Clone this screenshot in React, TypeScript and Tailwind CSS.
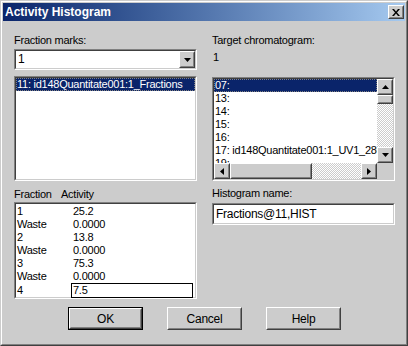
import React from "react";

function Sunken({ className = "", inner = "", children }: { className?: string; inner?: string; children?: React.ReactNode }) {
  return (
    <div className={`border border-t-[#808080] border-l-[#808080] border-r-white border-b-white ${className}`}>
      <div className={`h-full w-full border border-t-[#404040] border-l-[#404040] border-r-[#cccccc] border-b-[#cccccc] ${inner}`}>{children}</div>
    </div>
  );
}

function Raised({ className = "", children }: { className?: string; children?: React.ReactNode }) {
  return (
    <div className={`border border-t-white border-l-white border-r-[#404040] border-b-[#404040] bg-[#cccccc] ${className}`}>
      <div className="h-full w-full border border-t-[#cccccc] border-l-[#cccccc] border-r-[#808080] border-b-[#808080] flex items-center justify-center">
        {children}
      </div>
    </div>
  );
}

const Down = () => (
  <svg width="7" height="4" viewBox="0 0 7 4"><path d="M0 0h7L3.5 4z" fill="#000" /></svg>
);
const Up = () => (
  <svg width="7" height="4" viewBox="0 0 7 4"><path d="M0 4h7L3.5 0z" fill="#000" /></svg>
);
const Left = () => (
  <svg width="4" height="7" viewBox="0 0 4 7"><path d="M4 0v7L0 3.5z" fill="#000" /></svg>
);
const Right = () => (
  <svg width="4" height="7" viewBox="0 0 4 7"><path d="M0 0v7L4 3.5z" fill="#000" /></svg>
);

const dither =
  "bg-[repeating-conic-gradient(#ffffff_0_25%,#cccccc_0_50%)] [background-size:2px_2px]";

function Btn({ label, def }: { label: string; def?: boolean }) {
  const inner = <Raised className="w-full h-full"><span className="text-[12px]">{label}</span></Raised>;
  return def ? (
    <div className="w-[75px] h-[23px] border border-black">{inner}</div>
  ) : (
    <div className="w-[75px] h-[23px]">{inner}</div>
  );
}

export default function App() {
  const rows: [string, string][] = [
    ["1", "25.2"],
    ["Waste", "0.0000"],
    ["2", "13.8"],
    ["Waste", "0.0000"],
    ["3", "75.3"],
    ["Waste", "0.0000"],
  ];
  const items = ["07:", "13:", "14:", "15:", "16:", "17: id148Quantitate001:1_UV1_280nm", "19:"];
  return (
    <div className="w-[408px] h-[346px] border border-t-[#cccccc] border-l-[#cccccc] border-r-[#404040] border-b-[#404040] font-['Liberation_Sans',Arial,sans-serif] text-[11px] tracking-[-0.25px] text-black select-none">
      <div className="h-full w-full border border-t-white border-l-white border-r-[#808080] border-b-[#808080] bg-[#cccccc] p-px flex flex-col">
        {/* title bar */}
        <div className="h-[18px] bg-linear-to-r from-[#0a246a] to-[#a6caf0] flex items-center justify-between pl-[2px] pr-[1px]">
          <span className="text-white font-bold text-[12px] tracking-normal leading-none">Activity Histogram</span>
          <Raised className="w-[16px] h-[14px]">
            <svg width="8" height="7" viewBox="0 0 8 7">
              <path d="M0 0h2l2 2.5L6 0h2L5 3.5 8 7H6L4 4.5 2 7H0l3-3.5z" fill="#000" />
            </svg>
          </Raised>
        </div>

        <div className="pl-[11px] pt-[13px] grid grid-cols-[183px_183px] gap-x-[15px] leading-[13px]">
          {/* left column */}
          <div className="flex flex-col">
            <div className="h-[13px]">Fraction marks:</div>
            <Sunken className="mt-[2px] h-[21px]" inner="bg-white flex">
              <div className="flex-1 pl-[2px] leading-[17px] text-[12px]">1</div>
              <Raised className="w-[16px] h-[17px]"><Down /></Raised>
            </Sunken>
            <Sunken className="mt-[6px] h-[105px]" inner="bg-white">
              <div className="h-[13px] bg-[#0a246a] text-white pl-px whitespace-nowrap outline-1 outline-dotted outline-offset-[-1px] outline-[#808080]">11: id148Quantitate001:1_Fractions</div>
            </Sunken>
            <div className="mt-[7px] h-[13px] flex">
              <span className="w-[47px]">Fraction</span>
              <span>Activity</span>
            </div>
            <Sunken className="mt-px h-[97px]" inner="bg-white pt-px">
              {rows.map(([a, b], i) => (
                <div key={i} className="h-[13px] flex">
                  <span className="w-[57px] pl-px">{a}</span>
                  <span>{b}</span>
                </div>
              ))}
              <div className="h-[15px] flex">
                <span className="w-[55px] pl-px leading-[15px]">4</span>
                <div className="w-[122px] h-[15px] border border-black bg-white pl-px leading-[13px]">7.5</div>
              </div>
            </Sunken>
          </div>

          {/* right column */}
          <div className="flex flex-col">
            <div className="h-[13px]">Target chromatogram:</div>
            <div className="mt-[4px] h-[13px] pl-px">1</div>
            <Sunken className="mt-[13px] h-[104px]" inner="bg-white flex flex-col">
              <div className="flex h-[84px]">
                <div className="flex-1 overflow-hidden">
                  {items.map((t, i) => (
                    <div
                      key={i}
                      className={`h-[13px] pl-px whitespace-nowrap ${i === 0 ? "bg-[#0a246a] text-white outline-1 outline-dotted outline-offset-[-1px] outline-[#808080]" : ""}`}
                    >
                      {t}
                    </div>
                  ))}
                </div>
                <div className="w-[16px] flex flex-col">
                  <Raised className="h-[16px]"><Up /></Raised>
                  <Raised className="h-[9px]" />
                  <div className={`flex-1 ${dither}`} />
                  <Raised className="h-[16px]"><Down /></Raised>
                </div>
              </div>
              <div className="flex h-[16px]">
                <Raised className="w-[16px]"><Left /></Raised>
                <Raised className="w-[82px]" />
                <div className={`flex-1 ${dither}`} />
                <Raised className="w-[16px]"><Right /></Raised>
                <div className="w-[16px] bg-[#cccccc]" />
              </div>
            </Sunken>
            <div className="mt-[6px] h-[13px]">Histogram name:</div>
            <Sunken className="mt-[3px] h-[22px]" inner="bg-white pl-[2px] leading-[18px] text-[12px]">
              Fractions@11,HIST
            </Sunken>
          </div>
        </div>

        <div className="mt-[8px] flex justify-center gap-[24px] pl-px">
          <Btn label="OK" def />
          <Btn label="Cancel" />
          <Btn label="Help" />
        </div>
      </div>
    </div>
  );
}
